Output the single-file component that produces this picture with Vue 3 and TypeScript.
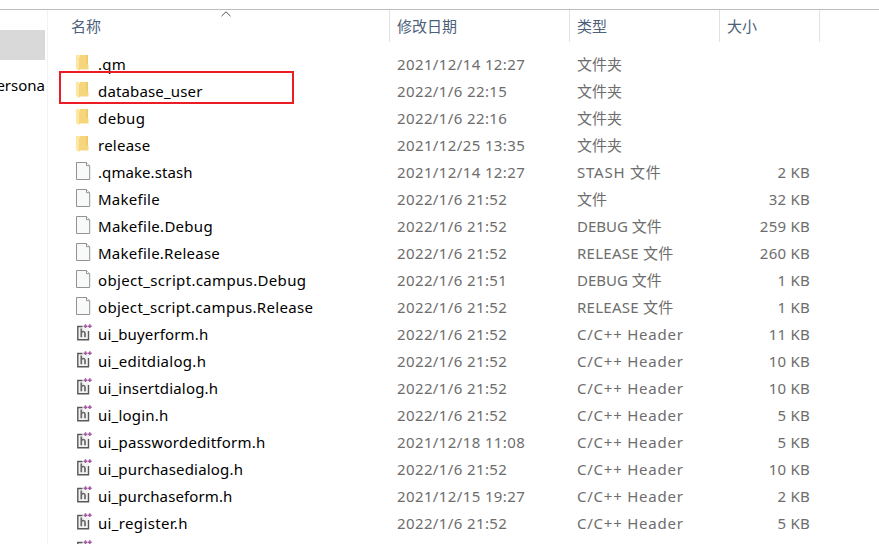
<script setup lang="ts">
type Kind = 'folder' | 'file' | 'header'

interface Entry {
  name: string
  date: string
  type: string
  size: string
  kind: Kind
  tracking: number
}

const folder = (name: string, date: string, tracking: number): Entry => ({ name, date, type: '文件夹', size: '', kind: 'folder', tracking })
const file = (name: string, date: string, type: string, size: string, tracking: number): Entry => ({ name, date, type, size, kind: 'file', tracking })
const header = (name: string, date: string, size: string, tracking: number): Entry => ({ name, date, type: 'C/C++ Header', size, kind: 'header', tracking })

const entries: Entry[] = [
  folder('.qm', '2021/12/14 12:27', 0.3),
  folder('database_user', '2022/1/6 22:15', 0.15),
  folder('debug', '2022/1/6 22:16', 0.4),
  folder('release', '2021/12/25 13:35', 0.25),
  file('.qmake.stash', '2021/12/14 12:27', 'STASH 文件', '2 KB', 0.07),
  file('Makefile', '2022/1/6 21:52', '文件', '32 KB', 0.25),
  file('Makefile.Debug', '2022/1/6 21:52', 'DEBUG 文件', '259 KB', 0.28),
  file('Makefile.Release', '2022/1/6 21:52', 'RELEASE 文件', '260 KB', 0.25),
  file('object_script.campus.Debug', '2022/1/6 21:51', 'DEBUG 文件', '1 KB', 0.34),
  file('object_script.campus.Release', '2022/1/6 21:52', 'RELEASE 文件', '1 KB', 0.31),
  header('ui_buyerform.h', '2022/1/6 21:52', '11 KB', 0.14),
  header('ui_editdialog.h', '2022/1/6 21:52', '10 KB', 0.3),
  header('ui_insertdialog.h', '2022/1/6 21:52', '10 KB', 0.18),
  header('ui_login.h', '2022/1/6 21:52', '5 KB', 0.2),
  header('ui_passwordeditform.h', '2021/12/18 11:08', '5 KB', 0.24),
  header('ui_purchasedialog.h', '2022/1/6 21:52', '10 KB', 0.18),
  header('ui_purchaseform.h', '2021/12/15 19:27', '2 KB', 0.12),
  header('ui_register.h', '2022/1/6 21:52', '5 KB', 0.34),
  { name: '', date: '', type: '', size: '', kind: 'header', tracking: 0 },
]

const typeTracking: Record<string, number> = {
  'STASH 文件': 0.78,
  'RELEASE 文件': 0.27,
  'C/C++ Header': 0.77,
}
</script>

<template>
  <div class="explorer">
    <aside class="tree">
      <div class="tree-selected"></div>
      <div class="tree-label">ersona</div>
    </aside>
    <main class="list">
      <div class="columns">
        <div class="col col-name">
          名称
          <svg class="sort" width="10" height="6" viewBox="0 0 10 6"><path d="M0.5 5.2 5 0.8 9.5 5.2" fill="none" stroke="#555" /></svg>
        </div>
        <div class="col">修改日期</div>
        <div class="col">类型</div>
        <div class="col">大小</div>
      </div>
      <div class="rows">
        <div v-for="(e, i) in entries" :key="i" class="row">
          <span class="icon">
            <svg v-if="e.kind === 'folder'" width="18" height="18" viewBox="0 0 18 18">
              <path d="M4 1h8v9.5l.5.5v4.500H3z" fill="#f6d67d" />
              <path d="M10 1h2v9.500h-1.500z" fill="#efc966" />
              <path d="M0 1h4l-.3 1v13.500L3 17 0 15z" fill="#ffe7a2" />
              <path d="M3.500 3v13" stroke="#f1d07a" fill="none" stroke-width=".8" />
            </svg>
            <svg v-else-if="e.kind === 'file'" width="18" height="19" viewBox="0 0 18 19">
              <path d="M.5.500h10l3.200 3.200v13.800H.5z" fill="#f8f9f9" stroke="#929292" />
              <path d="M10.500 .5V3.700h3.200" fill="#fff" stroke="#929292" />
            </svg>
            <svg v-else width="18" height="18" viewBox="0 0 18 18">
              <path d="M1 2h12v14H1z" fill="#f2f2f2" />
              <path d="M6.500 2.500H1.800v13.300h10.700V7" fill="none" stroke="#595959" stroke-width="1.400" />
              <path d="M5.300 4.500v8.700M5.300 9C6 7 9 7 9 9.200v4" fill="none" stroke="#686868" stroke-width="1.700" />
              <path d="M7.600 2.200h3.800M9.500 .3v3.800M11.900 2.200h3.800M13.800 .3v3.800" fill="none" stroke="#a45aa0" stroke-width="1.500" />
            </svg>
          </span>
          <span class="name" :style="{ letterSpacing: e.tracking + 'px' }">{{ e.name }}</span>
          <span class="date">{{ e.date }}</span>
          <span :style="{ letterSpacing: (typeTracking[e.type] ?? 0) + 'px' }">{{ e.type }}</span>
          <span class="size">{{ e.size }}</span>
        </div>
      </div>
      <div class="highlight"></div>
    </main>
  </div>
</template>

<style>
body {
  margin: 0;
  background: #fff;
}
</style>

<style scoped>
.explorer {
  box-sizing: border-box;
  width: 879px;
  height: 544px;
  padding-top: 9px;
  display: flex;
  overflow: hidden;
  background: linear-gradient(#bcbcbc, #bcbcbc) 0 9px / 100% 1px no-repeat #fff;
  font: 15px/27px "Noto Sans", "Noto Sans CJK SC", sans-serif;
  white-space: nowrap;
}
.tree {
  box-sizing: border-box;
  width: 48px;
  padding-top: 20px;
  margin-top: 1px;
  flex: none;
  border-right: 1px solid #f3f3f3;
}
.tree-selected {
  width: 45px;
  height: 30px;
  background: #d9d9d9;
}
.tree-label {
  width: 45px;
  margin-top: 12px;
  display: flex;
  justify-content: flex-end;
  color: #000;
}
.list {
  position: relative;
  flex: 1;
}
.columns {
  display: grid;
  grid-template-columns: 342px 180px 150px 100px;
  height: 32px;
  padding-top: 1px;
  color: #4c607a;
  line-height: 33px;
}
.col {
  box-sizing: border-box;
  height: 32px;
  padding-left: 7px;
  border-right: 1px solid #e2e2e2;
}
.col-name {
  position: relative;
  padding-left: 23px;
}
.sort {
  position: absolute;
  left: 173px;
  top: 1px;
}
.rows {
  padding-top: 9px;
}
.row {
  display: grid;
  grid-template-columns: 22px 299px 180px 133px 100px;
  height: 27px;
  padding-left: 28px;
  color: #6d6d6d;
}
.icon {
  padding-top: 3px;
  line-height: 0;
}
.name {
  color: #000;
}
.date {
  letter-spacing: 0.38px;
}
.size {
  text-align: right;
  letter-spacing: 0.25px;
}
.highlight {
  position: absolute;
  box-sizing: border-box;
  left: 11px;
  top: 62px;
  width: 235px;
  height: 33px;
  border: 2px solid #ed1c24;
}
</style>
